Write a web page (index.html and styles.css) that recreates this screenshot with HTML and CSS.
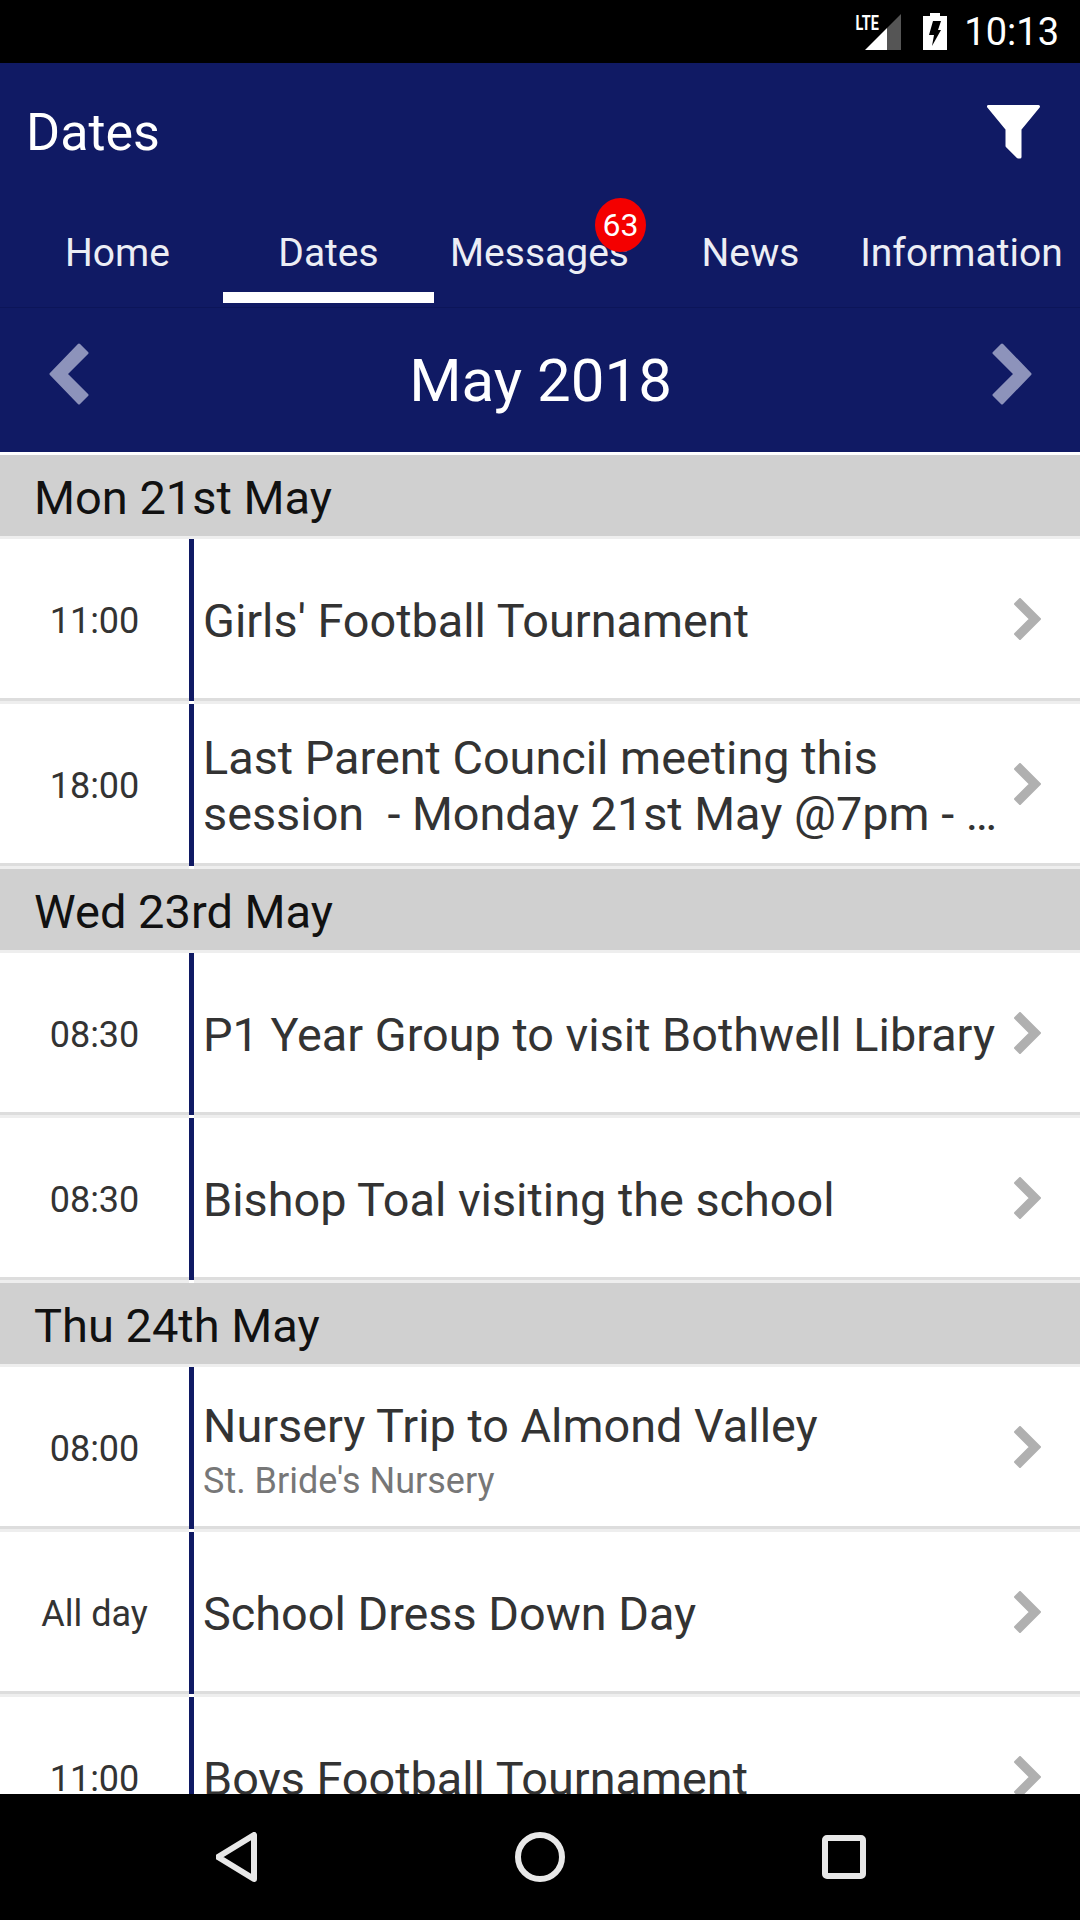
FILE: index.html
```html
<html>
<head>
    <link rel="stylesheet" href="styles.css">
</head>
<body>
<div class="screen">
    <div class="status">
        <div class="signal">
            <span class="lte">LTE</span>
            <svg width="36" height="36" viewBox="0 0 36 36">
                <path fill="#555" d="M36 0V36H22V14Z"/>
                <path fill="#fff" d="M22 14V36H0Z"/>
            </svg>
        </div>
        <svg class="battery" width="24" height="37" viewBox="0 0 24 37">
            <path fill="#fff" d="M7 0H17V3H24V37H0V3H7Z"/>
            <path fill="#000" d="M10 8H18L15 17H18L9 33L11 22H6Z"/>
        </svg>
        <span class="clock">10:13</span>
    </div>

    <div class="header">
        <div class="title-row">
            <span class="title">Dates</span>
            <svg class="filter" width="53" height="54" viewBox="0 0 53 54">
                <path fill="#fff" stroke="#fff" stroke-width="3" stroke-linejoin="round" d="M1.5 1.5H51.5L33 24V52L31 52L20 41V24Z"/>
            </svg>
        </div>
        <div class="tabs">
            <div class="tab">Home</div>
            <div class="tab active">Dates</div>
            <div class="tab">Messages<span class="badge">63</span></div>
            <div class="tab">News</div>
            <div class="tab">Information</div>
        </div>
        <div class="month-row">
            <svg class="arrow" width="40" height="62" viewBox="0 0 40 62">
                <path d="M2 31L30 2L38 10L17 31L38 52L30 60Z"/>
            </svg>
            <span class="month">May 2018</span>
            <svg class="arrow" width="40" height="62" viewBox="0 0 40 62">
                <path d="M38 31L10 2L2 10L23 31L2 52L10 60Z"/>
            </svg>
        </div>
    </div>

    <div class="list">
        <div class="day">Mon 21st May</div>
        <div class="row">
            <div class="time">11:00</div>
            <div class="bar"></div>
            <div class="body">
                <div class="event">Girls' Football Tournament</div>
                <svg class="chevron" width="28" height="42" viewBox="0 0 28 42"><path d="M1 6L6 1L26 21L6 41L1 36L16 21Z"/></svg>
            </div>
        </div>
        <div class="row">
            <div class="time">18:00</div>
            <div class="bar"></div>
            <div class="body">
                <div class="event">Last Parent Council meeting this session  - Monday 21st May @7pm - Woodlands Hall</div>
                <svg class="chevron" width="28" height="42" viewBox="0 0 28 42"><path d="M1 6L6 1L26 21L6 41L1 36L16 21Z"/></svg>
            </div>
        </div>

        <div class="day">Wed 23rd May</div>
        <div class="row">
            <div class="time">08:30</div>
            <div class="bar"></div>
            <div class="body">
                <div class="event">P1 Year Group to visit Bothwell Library</div>
                <svg class="chevron" width="28" height="42" viewBox="0 0 28 42"><path d="M1 6L6 1L26 21L6 41L1 36L16 21Z"/></svg>
            </div>
        </div>
        <div class="row">
            <div class="time">08:30</div>
            <div class="bar"></div>
            <div class="body">
                <div class="event">Bishop Toal visiting the school</div>
                <svg class="chevron" width="28" height="42" viewBox="0 0 28 42"><path d="M1 6L6 1L26 21L6 41L1 36L16 21Z"/></svg>
            </div>
        </div>

        <div class="day">Thu 24th May</div>
        <div class="row">
            <div class="time">08:00</div>
            <div class="bar"></div>
            <div class="body">
                <div class="event with-sub">Nursery Trip to Almond Valley<div class="sub">St. Bride's Nursery</div></div>
                <svg class="chevron" width="28" height="42" viewBox="0 0 28 42"><path d="M1 6L6 1L26 21L6 41L1 36L16 21Z"/></svg>
            </div>
        </div>
        <div class="row">
            <div class="time">All day</div>
            <div class="bar"></div>
            <div class="body">
                <div class="event">School Dress Down Day</div>
                <svg class="chevron" width="28" height="42" viewBox="0 0 28 42"><path d="M1 6L6 1L26 21L6 41L1 36L16 21Z"/></svg>
            </div>
        </div>
        <div class="row">
            <div class="time">11:00</div>
            <div class="bar"></div>
            <div class="body">
                <div class="event">Boys Football Tournament</div>
                <svg class="chevron" width="28" height="42" viewBox="0 0 28 42"><path d="M1 6L6 1L26 21L6 41L1 36L16 21Z"/></svg>
            </div>
        </div>
    </div>

    <div class="nav">
        <svg width="42" height="50" viewBox="0 0 42 50">
            <path d="M38 3V47L2 25Z"/>
        </svg>
        <svg width="50" height="50" viewBox="0 0 50 50">
            <circle cx="25" cy="25" r="22"/>
        </svg>
        <svg width="44" height="44" viewBox="0 0 44 44">
            <rect x="3" y="3" width="38" height="38" rx="2"/>
        </svg>
    </div>
</div>
</body>
</html>
```

FILE: styles.css
```css
body {
    margin: 0;
    font-family: Roboto, sans-serif;
    background-color: #fff;
}
.screen {
    width: 1080px;
    height: 1920px;
    display: flex;
    flex-direction: column;
    overflow: hidden;
}
.status {
    height: 63px;
    flex: none;
    background-color: #000;
    color: #fff;
    display: flex;
    align-items: center;
    justify-content: flex-end;
    padding-right: 21px;
}
.signal {
    position: relative;
    height: 36px;
    margin-right: 22px;
}
.signal svg {
    display: block;
}
.lte {
    position: absolute;
    left: -14px;
    top: -1px;
    font-weight: bold;
    font-size: 20px;
    line-height: 20px;
    transform: scaleX(0.72);
}
.battery {
    margin-right: 17px;
}
.clock {
    font-size: 38px;
}
.header {
    background-color: #101a64;
    color: #fff;
    flex: none;
}
.title-row {
    height: 138px;
    display: flex;
    align-items: center;
    justify-content: space-between;
    padding: 0 40px 0 26px;
}
.title {
    font-size: 52px;
}
.filter {
    margin-top: 0;
}
.tabs {
    display: flex;
    padding: 0 12px 4px;
    border-bottom: 1px solid #0c1559;
}
.tab {
    position: relative;
    width: 211px;
    height: 102px;
    box-sizing: border-box;
    padding-top: 12px;
    border-bottom: 11px solid transparent;
    display: flex;
    align-items: center;
    justify-content: center;
    font-size: 39px;
    color: #eceef5;
    white-space: nowrap;
}
.tab.active {
    border-bottom-color: #fff;
}
.badge {
    position: absolute;
    left: 161px;
    top: -3px;
    width: 51px;
    height: 54px;
    border-radius: 50%;
    background-color: #f40000;
    color: #fff;
    font-size: 32px;
    display: flex;
    align-items: center;
    justify-content: center;
}
.month-row {
    height: 144px;
    display: flex;
    align-items: center;
    justify-content: space-between;
    padding: 0 48px 0 49px;
    border-bottom: 3px solid #fff;
}
.month {
    font-size: 60px;
}
.arrow {
    margin-top: -12px;
}
.arrow path {
    fill: #8d93bb;
    stroke: #8d93bb;
    stroke-width: 3;
    stroke-linejoin: round;
}
.list {
    flex: 1;
    overflow: hidden;
}
.day {
    height: 81px;
    background-color: #d0d0d0;
    border-bottom: 3px solid #eee;
    padding-left: 34px;
    font-size: 47px;
    line-height: 85px;
    color: #111;
}
.row {
    height: 165px;
    display: flex;
    color: #333;
}
.time {
    width: 189px;
    flex: none;
    box-sizing: border-box;
    padding-top: 2px;
    border-bottom: 3px solid #eee;
    box-shadow: inset 0 -3px 0 #ddd;
    display: flex;
    align-items: center;
    justify-content: center;
    font-size: 36px;
}
.bar {
    width: 5px;
    flex: none;
    background-color: #101a64;
    border-bottom: 3px solid #fff;
}
.body {
    flex: 1;
    min-width: 0;
    box-sizing: border-box;
    border-bottom: 3px solid #eee;
    box-shadow: inset 0 -3px 0 #ddd;
    padding: 0 38px 3px 9px;
    display: flex;
    align-items: center;
    justify-content: space-between;
}
.event {
    width: 798px;
    margin-top: 5px;
    font-size: 46.8px;
    line-height: 56px;
    white-space: pre-wrap;
    display: -webkit-box;
    -webkit-box-orient: vertical;
    -webkit-line-clamp: 2;
    overflow: hidden;
}
.event.with-sub {
    margin-top: 12px;
}
.sub {
    font-size: 36px;
    line-height: 54px;
    color: #777;
}
.chevron {
    flex: none;
}
.chevron path {
    fill: #b0b0b0;
    stroke: #b0b0b0;
    stroke-width: 2;
    stroke-linejoin: round;
}
.nav {
    height: 126px;
    flex: none;
    background-color: #000;
    display: flex;
    align-items: center;
    justify-content: center;
    padding-left: 1px;
    box-sizing: border-box;
    gap: 257px;
}
.nav svg {
    fill: none;
    stroke: #e8e8e8;
    stroke-width: 6;
    stroke-linejoin: round;
}
```
